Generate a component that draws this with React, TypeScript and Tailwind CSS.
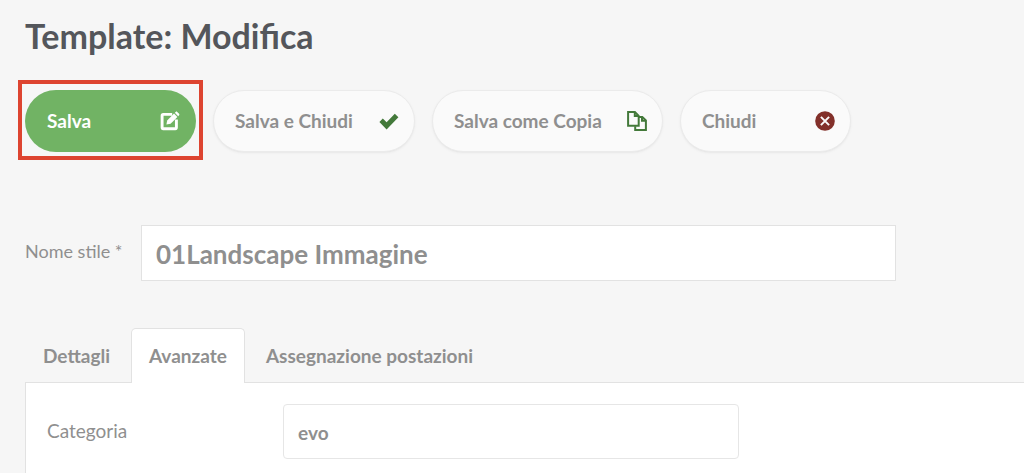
import React, { useState } from "react";

const EditIcon = () => (
  <svg className="size-5 shrink-0" viewBox="0 0 20 20" fill="none" aria-hidden="true">
    <path
      d="M12.2 3.4H3.2C2.5 3.4 2.1 3.8 2.1 4.5V16.6C2.1 17.3 2.5 17.7 3.2 17.7H15.3C16 17.7 16.4 17.3 16.4 16.6V8.6"
      stroke="currentColor"
      strokeWidth="2.9"
    />
    <path d="M6.4 13.6L7.2 9.4L14 2.6L17.4 6L10.6 12.8Z" fill="currentColor" />
    <path d="M14.8 1.8L15.7 0.9C16.2 0.5 16.8 0.5 17.2 0.9L19.1 2.8C19.5 3.2 19.5 3.8 19.1 4.3L18.2 5.2Z" fill="currentColor" />
  </svg>
);

const CheckIcon = () => (
  <svg className="size-5 shrink-0" viewBox="0 0 20 20" fill="#43793a" aria-hidden="true">
    <path d="M0.4 11L3.8 7.6L7.6 11.2L15.8 2.8L19.4 6.2L7.6 18.4Z" />
  </svg>
);

const CopyIcon = () => (
  <svg className="size-5 shrink-0" viewBox="0 0 20 20" fill="none" stroke="#43793a" strokeWidth="2" aria-hidden="true">
    <path d="M8.2 15.2V18.9H18.9V9.5L15.3 5.9H12" />
    <path d="M15 5.9V9.8H18.9" />
    <path d="M1.1 1.1H7.9L11.7 4.9V14.8H1.1Z" fill="#fafafa" />
    <path d="M7.8 1.1V5.1H11.7" />
  </svg>
);

const CancelIcon = () => (
  <svg className="size-5 shrink-0" viewBox="0 0 20 20" aria-hidden="true">
    <circle cx="10" cy="10" r="9.8" fill="#82302a" />
    <path d="M5.9 5.9L14.1 14.1M14.1 5.9L5.9 14.1" stroke="#fafafa" strokeWidth="2" />
  </svg>
);

const actions = [
  { label: "Salva e Chiudi", icon: <CheckIcon />, width: "min-w-[202px]" },
  { label: "Salva come Copia", icon: <CopyIcon />, width: "min-w-[231px]" },
  { label: "Chiudi", icon: <CancelIcon />, width: "min-w-[171px]" },
];

const tabs = ["Dettagli", "Avanzate", "Assegnazione postazioni"];

const App = () => {
  const [activeTab, setActiveTab] = useState("Avanzate");

  return (
    <div className="flex min-h-screen flex-col bg-[#f6f6f6] pt-4 pl-[25px] font-['Lato',sans-serif] text-[19px] leading-6 text-[#8f8f8f]">
      <h1 className="text-[34px] leading-10 font-bold text-[#54565b]">Template: Modifica</h1>

      {/* Toolbar */}
      <div className="mt-[34px] flex flex-wrap gap-[17px]">
        <div className="relative">
          <button
            type="button"
            className="flex h-[62px] min-w-[171px] items-center justify-between rounded-full bg-[#71b364] pr-4 pl-[22px] font-bold text-white"
          >
            Salva
            <EditIcon />
          </button>
          <span className="pointer-events-none absolute -inset-x-[7px] -top-[10px] -bottom-2 border-4 border-[#dd4430]" />
        </div>
        {actions.map((action) => (
          <button
            key={action.label}
            type="button"
            className={`flex h-[62px] items-center justify-between rounded-full border border-[#ebebeb] bg-[#fafafa] pr-[15px] pl-[21px] font-bold shadow-sm shadow-black/5 ${action.width}`}
          >
            {action.label}
            {action.icon}
          </button>
        ))}
      </div>

      {/* Style name */}
      <div className="mt-[73px] mr-32 flex items-center">
        <label htmlFor="style-name" className="w-[116px] shrink-0 pb-1 text-[18px]">
          Nome stile *
        </label>
        <input
          id="style-name"
          type="text"
          defaultValue="01Landscape Immagine"
          className="h-14 min-w-0 flex-1 border border-[#e2e2e2] bg-white px-[14px] pt-0.5 text-[26px] font-bold text-[#8f8f8f] outline-none"
        />
      </div>

      <div role="tablist" className="mt-[47px] flex gap-[3px]">
        {tabs.map((tab) => (
          <button
            key={tab}
            type="button"
            role="tab"
            aria-selected={tab === activeTab}
            onClick={() => setActiveTab(tab)}
            className={`h-[55px] rounded-t-[5px] border border-b-0 px-[17px] font-bold ${
              tab === activeTab ? "z-10 border-[#e2e2e2] bg-white" : "border-transparent"
            }`}
          >
            {tab}
          </button>
        ))}
      </div>
      <div role="tabpanel" className="-mt-px flex-1 border-t border-l border-[#e2e2e2] bg-white pt-[21px] pr-6 pl-[21px]">
        <div className="flex items-center">
          <label htmlFor="category" className="w-[236px] shrink-0 pb-0.5">
            Categoria
          </label>
          <input
            id="category"
            type="text"
            defaultValue="evo"
            className="h-[55px] w-full max-w-[456px] rounded-[4px] border border-[#e6e6e6] bg-white px-[14px] pt-0.5 font-bold text-[#8f8f8f] outline-none"
          />
        </div>
      </div>
    </div>
  );
};

export default App;
